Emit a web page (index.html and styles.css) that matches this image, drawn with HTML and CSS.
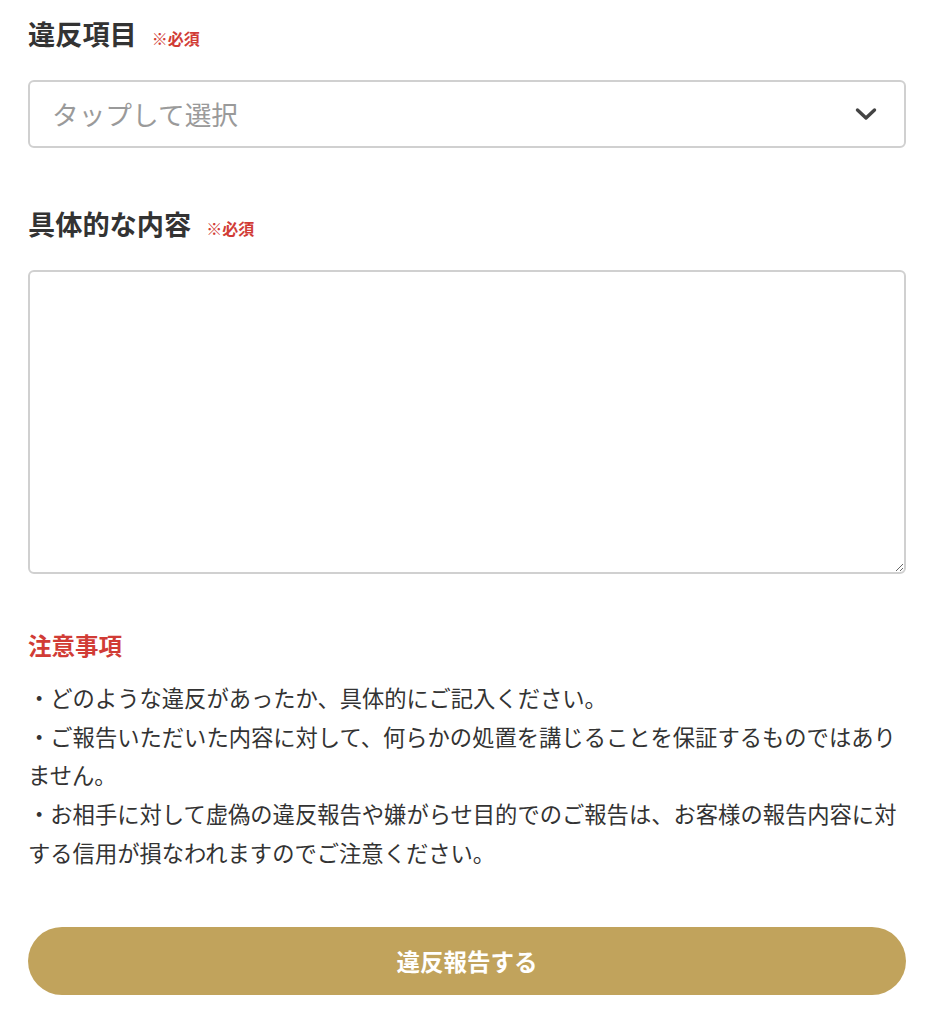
FILE: index.html
```html
<!DOCTYPE html>
<html lang="ja">
<head>
<meta charset="utf-8">
<link rel="stylesheet" href="styles.css">
</head>
<body>
<form class="report">
  <div class="field">
    <div class="label">違反項目<span class="req">※必須</span></div>
    <div class="select">
      <span class="placeholder">タップして選択</span>
      <svg class="chev" width="22" height="14" viewBox="0 0 22 14"><path d="M2.5 3 L11 11 L19.5 3" fill="none" stroke="#444" stroke-width="3.4" stroke-linecap="round" stroke-linejoin="round"/></svg>
    </div>
  </div>
  <div class="field field2">
    <div class="label">具体的な内容<span class="req">※必須</span></div>
    <textarea class="area"></textarea>
  </div>
  <div class="notice">
    <div class="notice-title">注意事項</div>
    <p class="notice-text">・どのような違反があったか、具体的にご記入ください。<br>・ご報告いただいた内容に対して、何らかの処置を講じることを保証するものではありません。<br>・お相手に対して虚偽の違反報告や嫌がらせ目的でのご報告は、お客様の報告内容に対する信用が損なわれますのでご注意ください。</p>
  </div>
  <button type="button" class="submit">違反報告する</button>
</form>
</body>
</html>
```
FILE: styles.css
```css
html, body {
  margin: 0;
  padding: 0;
  background: #fff;
}
body {
  font-family: "Noto Sans CJK JP", "Noto Sans", sans-serif;
  color: #333;
}
.report {
  padding: 13px 32px 0 28px;
  display: flex;
  flex-direction: column;
}
.label {
  font-size: 27.2px;
  font-weight: 700;
  line-height: 40px;
  height: 40px;
  color: #333;
  display: flex;
  align-items: baseline;
}
.req {
  font-size: 16px;
  line-height: 20px;
  color: #d13c36;
  margin-left: 15px;
  font-weight: 700;
}
.select {
  margin-top: 27px;
  height: 68px;
  box-sizing: border-box;
  border: 2px solid #d0d0d0;
  border-radius: 6px;
  display: flex;
  align-items: center;
  justify-content: space-between;
  padding: 0 27px 0 22px;
}
.placeholder {
  font-size: 26.7px;
  color: #9a9a9a;
  line-height: 1;
}
.chev {
  display: block;
}
.field2 {
  margin-top: 55px;
  display: flex;
  flex-direction: column;
}
.area {
  margin-top: 27px;
  height: 304px;
  box-sizing: border-box;
  border: 2px solid #d0d0d0;
  border-radius: 6px;
  resize: vertical;
  font-family: inherit;
  font-size: 20px;
  width: 100%;
}
.notice {
  margin-top: 55px;
}
.notice-title {
  font-size: 23.5px;
  font-weight: 700;
  color: #d13c36;
  line-height: 32px;
}
.notice-text {
  margin: 17px 0 0;
  font-size: 22.3px;
  line-height: 38.7px;
  color: #333;
}
.submit {
  margin-top: 55px;
  height: 68px;
  border: none;
  border-radius: 34px;
  background: #c1a35c;
  color: #fff;
  font-family: inherit;
  font-size: 23.5px;
  font-weight: 700;
  width: 100%;
}
```
